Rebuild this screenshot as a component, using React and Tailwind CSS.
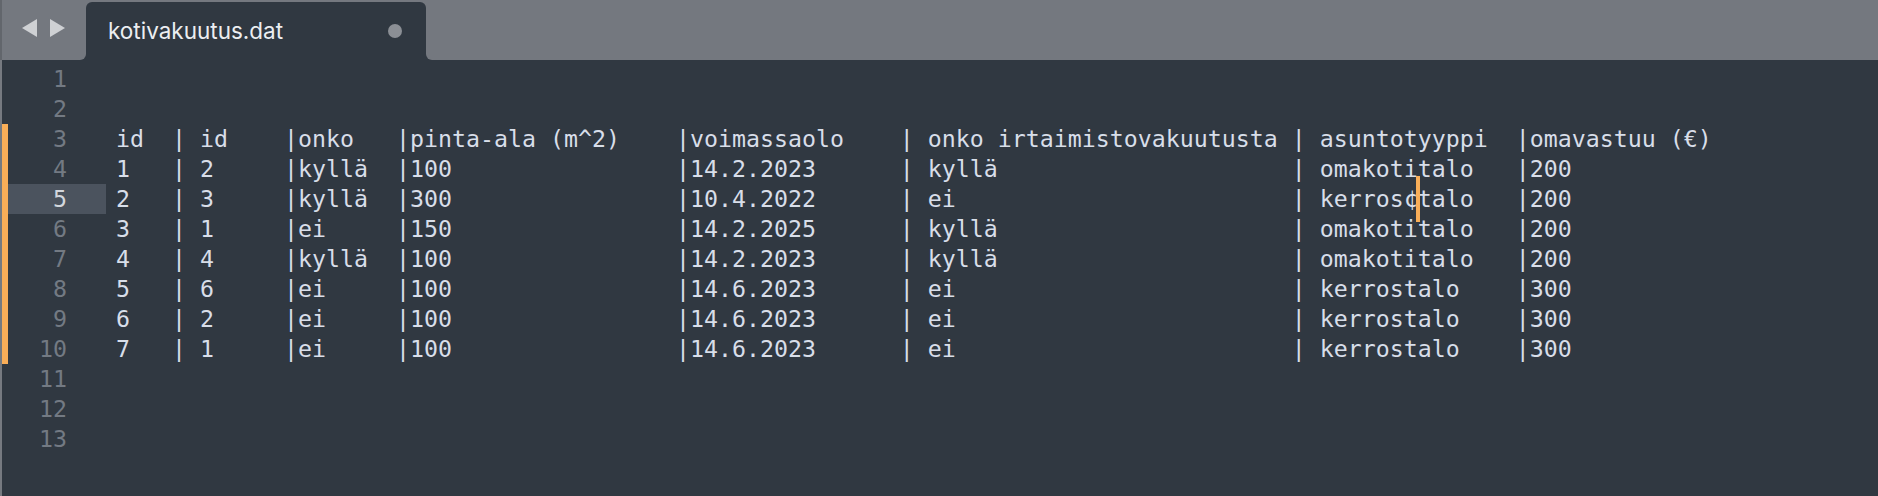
import React from 'react';

const header = ['id', 'id', 'onko', 'pinta-ala (m^2)', 'voimassaolo', 'onko irtaimistovakuutusta', 'asuntotyyppi', 'omavastuu (€)'];

const rows = [
    ['1', '2', 'kyllä', '100', '14.2.2023', 'kyllä', 'omakotitalo', '200'],
    ['2', '3', 'kyllä', '300', '10.4.2022', 'ei', 'kerros¢talo', '200'],
    ['3', '1', 'ei', '150', '14.2.2025', 'kyllä', 'omakotitalo', '200'],
    ['4', '4', 'kyllä', '100', '14.2.2023', 'kyllä', 'omakotitalo', '200'],
    ['5', '6', 'ei', '100', '14.6.2023', 'ei', 'kerrostalo', '300'],
    ['6', '2', 'ei', '100', '14.6.2023', 'ei', 'kerrostalo', '300'],
    ['7', '1', 'ei', '100', '14.6.2023', 'ei', 'kerrostalo', '300'],
];

// pad the fields so the pipes land in the same columns as in the file
const formatRow = (f) =>
    f[0].padEnd(4) + '| ' + f[1].padEnd(6) + '|' + f[2].padEnd(7) + '|' + f[3].padEnd(19) +
    '|' + f[4].padEnd(15) + '| ' + f[5].padEnd(26) + '| ' + f[6].padEnd(14) + '|' + f[7];

const lines = ['', '', formatRow(header), ...rows.map(formatRow), '', '', ''];

const modified = [3, 4, 5, 6, 7, 8, 9, 10];
const activeLine = 5;

function TabBar() {
    return (
        <div className="flex h-[60px] bg-[#303841]">
            <div className="flex w-[86px] items-center gap-[13px] rounded-br-[6px] border-l-2 border-[#62666c] bg-[#74787f] pl-[20px] pb-[4px]">
                <svg width="15" height="18" viewBox="0 0 15 18">
                    <polygon points="15,0 15,18 0,9" fill="#cfd1d4" />
                </svg>
                <svg width="15" height="18" viewBox="0 0 15 18">
                    <polygon points="0,0 0,18 15,9" fill="#cfd1d4" />
                </svg>
            </div>
            <div className="w-[340px] bg-[#74787f]">
                <div className="mt-[2px] flex h-[58px] items-center justify-between rounded-t-[6px] bg-[#303841] pl-[22px] pr-[24px]">
                    <span className="font-['Inter','Noto_Sans',sans-serif] text-[22.5px] text-[#eceef1]">kotivakuutus.dat</span>
                    <span className="h-[14px] w-[14px] rounded-full bg-[#8b8f95]" />
                </div>
            </div>
            <div className="flex-1 rounded-bl-[6px] bg-[#74787f]" />
        </div>
    );
}

export default function App() {
    return (
        <div className="h-[496px] w-[1878px] overflow-hidden bg-[#303841]">
            <TabBar />
            <div className="relative h-[436px] border-l-2 border-[#767a80] pt-[4px] font-['DejaVu_Sans_Mono','Liberation_Mono',monospace] text-[23.25px] leading-[30px]">
                {lines.map((text, i) => {
                    const n = i + 1;
                    const isActive = n === activeLine;
                    return (
                        <div key={n} className="flex h-[30px]">
                            <div className={`w-[6px] ${modified.includes(n) ? 'bg-[#f9ae58]' : ''}`} />
                            <div className={`w-[98px] pr-[39px] text-right ${isActive ? 'bg-[#4b535e] text-[#d3d7dd]' : 'text-[#737a83]'}`}>
                                {n}
                            </div>
                            <div className="whitespace-pre pl-[10px] text-[#d8dee9]">{text}</div>
                        </div>
                    );
                })}
                {/* caret on line 5 */}
                <div className="absolute left-[1414px] top-[116px] h-[46px] w-[4px] bg-[#f9ae58]" />
            </div>
        </div>
    );
}
